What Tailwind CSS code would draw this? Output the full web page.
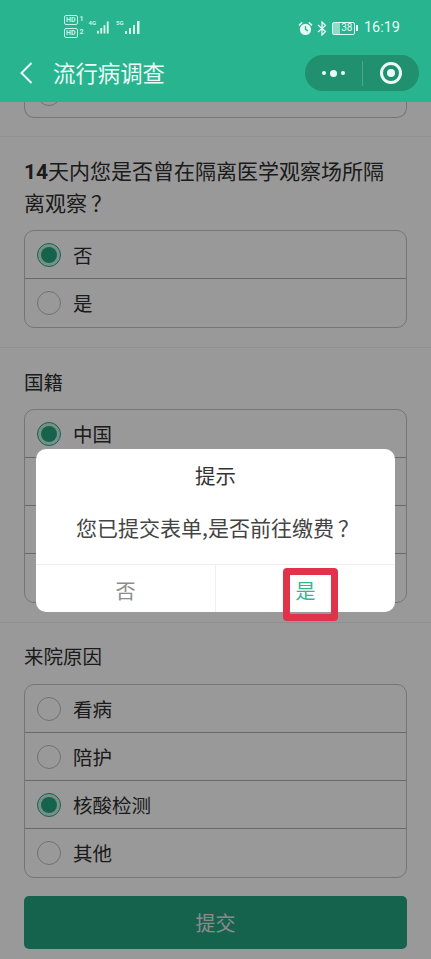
<!DOCTYPE html>
<html lang="zh">
<head>
  <meta charset="UTF-8" />
  <meta name="viewport" content="width=device-width, initial-scale=1.0" />
  <title>流行病调查</title>
  <script src="https://cdn.jsdelivr.net/npm/@tailwindcss/browser@4"></script>
</head>
<body class="bg-white">
  <div class="relative w-[431px] h-[959px] overflow-hidden bg-white text-[#2e2e2e] font-['Noto_Sans_CJK_SC','Noto_Sans',sans-serif]">

    <!-- header -->
    <header class="relative z-20 h-[102px] bg-[#28b48f] text-white">
      <div class="flex h-[55px] items-start justify-between pl-[64px] pr-[31px] pt-[15px]">
        <div class="flex items-start gap-[5px]">
          <div class="flex flex-col gap-[3px] text-[7px] leading-[9px] font-bold font-['Roboto',sans-serif] text-[#c9f3e6]">
            <div class="flex gap-[2px]"><span class="border border-[#c9f3e6] rounded-[2px] px-[1px] h-[10px] leading-[8px]">HD</span><span>1</span></div>
            <div class="flex gap-[2px]"><span class="border border-[#c9f3e6] rounded-[2px] px-[1px] h-[10px] leading-[8px]">HD</span><span>2</span></div>
          </div>
          <div class="flex items-end h-[15px] mt-[5px] text-[6px] leading-[6px] font-bold font-['Roboto',sans-serif] text-[#c9f3e6]">
            <span class="self-start">4G</span>
            <svg class="ml-[1px]" width="14" height="15" viewBox="0 0 15 15" fill="#d7f7ed"><rect x="0" y="11" width="2" height="3"/><rect x="3.5" y="8" width="2" height="6"/><rect x="7" y="5" width="2" height="9"/><rect x="10.5" y="1" width="2" height="13"/></svg>
          </div>
          <div class="flex items-end h-[15px] mt-[5px] text-[6px] leading-[6px] font-bold font-['Roboto',sans-serif] text-[#c9f3e6]">
            <span class="self-start w-[7px]">5G</span>
            <svg class="ml-[2px]" width="17" height="15" viewBox="0 0 17 15" fill="#d7f7ed"><rect x="0" y="11" width="2" height="3"/><rect x="4" y="8" width="2" height="6"/><rect x="8" y="5" width="2" height="9"/><rect x="12" y="1" width="2.5" height="13"/></svg>
          </div>
        </div>
        <div class="flex items-center h-[26px]">
          <svg width="15" height="15" viewBox="0 0 16 16" fill="#e4faf3"><circle cx="8" cy="9" r="6"/><path d="M0.5 4 L4 0.8 L5 2 L1.6 5.2 Z M15.5 4 L12 0.8 L11 2 L14.4 5.2 Z"/><path d="M8 5.5 V9 L10.5 10.5" stroke="#28b48f" stroke-width="1.4" fill="none"/></svg>
          <svg class="ml-[4px]" width="10" height="15" viewBox="0 0 10 15" fill="none" stroke="#e4faf3" stroke-width="1.3"><path d="M1 4 L8.5 10.5 L5 14 V1 L8.5 4.5 L1 11"/></svg>
          <div class="ml-[5px] flex items-center">
            <div class="flex h-[13px] w-[23px] items-center justify-end rounded-[2px] border border-[#e4faf3] bg-[linear-gradient(90deg,#8fdcc6_35%,transparent_35%)] pr-[2px] text-[10px] leading-none font-['Roboto',sans-serif] text-[#e4faf3]">38</div>
            <div class="ml-[1px] h-[6px] w-[1.5px] bg-[#e4faf3]"></div>
          </div>
          <span class="ml-[6px] text-[14.5px] leading-none font-['Roboto',sans-serif] text-[#e4faf3]">16:19</span>
        </div>
      </div>
      <div class="flex h-[36px] items-center justify-between pl-[20px] pr-[12px]">
        <div class="flex items-center">
          <svg width="13" height="22" viewBox="0 0 13 22" fill="none" stroke="#eafbf6" stroke-width="2"><path d="M11.5 1 L1.5 11 L11.5 21"/></svg>
          <span class="ml-[20px] -mt-[2px] text-[22.4px] leading-[36px] text-[#eafbf6]">流行病调查</span>
        </div>
        <div class="flex h-[36px] w-[114px] items-center rounded-full bg-[#21906f]">
          <div class="flex w-[57px] items-center justify-center gap-[4px]">
            <span class="size-[4px] rounded-full bg-[#eafbf6]"></span>
            <span class="size-[7px] rounded-full bg-[#eafbf6]"></span>
            <span class="size-[4px] rounded-full bg-[#eafbf6]"></span>
          </div>
          <div class="h-[25px] w-px bg-white/20"></div>
          <div class="flex flex-1 items-center justify-center">
            <span class="flex size-[22px] items-center justify-center rounded-full border-[3px] border-[#eafbf6]"><span class="size-[8px] rounded-full bg-[#eafbf6]"></span></span>
          </div>
        </div>
      </div>
    </header>

    <!-- form under the mask -->
    <main>
      <section class="h-[35px] px-[24px] border-b border-[#eeeeee]">
        <div class="relative h-[16px] overflow-hidden rounded-b-[10px] border border-t-0 border-[#c4c4c4]">
          <span class="absolute left-[12px] top-[-20px] size-[24px] rounded-full border border-[#bdbdbd]"></span>
        </div>
      </section>

      <section class="h-[211px] px-[24px] pt-[18px] border-b border-[#eeeeee]">
        <h2 class="h-[75px] pr-[12px] text-[21px] leading-[30px]"><b class="font-['Roboto',sans-serif] font-bold">14</b>天内您是否曾在隔离医学观察场所隔离观察<span class="ml-[4px] font-['Noto_Sans_CJK_TC',sans-serif]">？</span></h2>
        <div class="divide-y divide-[#b0b0b0] rounded-[10px] border border-[#c4c4c4]">
          <label class="flex h-[48px] items-center gap-[12px] pl-[12px] text-[19.5px]"><span class="flex size-[24px] items-center justify-center rounded-full border border-[#26a581] bg-[#c8f0e3]"><span class="size-[16px] rounded-full bg-[#26a581]"></span></span>否</label>
          <label class="flex h-[48px] items-center gap-[12px] pl-[12px] text-[19.5px]"><span class="size-[24px] rounded-full border border-[#bdbdbd]"></span>是</label>
        </div>
      </section>

      <section class="h-[275px] px-[24px] pt-[19px] border-b border-[#eeeeee]">
        <h2 class="h-[42px] text-[19.5px] leading-[30px]">国籍</h2>
        <div class="divide-y divide-[#b0b0b0] rounded-[10px] border border-[#c4c4c4]">
          <label class="flex h-[48px] items-center gap-[12px] pl-[12px] text-[19.5px]"><span class="flex size-[24px] items-center justify-center rounded-full border border-[#26a581] bg-[#c8f0e3]"><span class="size-[16px] rounded-full bg-[#26a581]"></span></span>中国</label>
          <div class="h-[48px]"></div>
          <div class="h-[48px]"></div>
          <div class="h-[48px]"></div>
        </div>
      </section>

      <section class="px-[24px] pt-[18px]">
        <h2 class="h-[43px] text-[19.5px] leading-[30px]">来院原因</h2>
        <div class="divide-y divide-[#b0b0b0] rounded-[10px] border border-[#c4c4c4]">
          <label class="flex h-[48px] items-center gap-[12px] pl-[12px] text-[19.5px]"><span class="size-[24px] rounded-full border border-[#bdbdbd]"></span>看病</label>
          <label class="flex h-[48px] items-center gap-[12px] pl-[12px] text-[19.5px]"><span class="size-[24px] rounded-full border border-[#bdbdbd]"></span>陪护</label>
          <label class="flex h-[48px] items-center gap-[12px] pl-[12px] text-[19.5px]"><span class="flex size-[24px] items-center justify-center rounded-full border border-[#26a581] bg-[#c8f0e3]"><span class="size-[16px] rounded-full bg-[#26a581]"></span></span>核酸检测</label>
          <label class="flex h-[48px] items-center gap-[12px] pl-[12px] text-[19.5px]"><span class="size-[24px] rounded-full border border-[#bdbdbd]"></span>其他</label>
        </div>
        <button class="mt-[18px] h-[53px] w-full rounded-[5px] bg-[#26a581] text-[20px] text-[#e6e6e6]">提交</button>
      </section>
    </main>

    <!-- mask -->
    <div class="absolute inset-0 z-10 bg-black/40"></div>

    <!-- dialog -->
    <div class="absolute left-[36px] top-[449px] z-30 w-[359px] rounded-[10px] bg-white text-[#333333]">
      <div class="pt-[11px] text-center text-[20.5px] leading-[30px]">提示</div>
      <div class="pl-[4px] pt-[22px] text-center text-[21px] leading-[30px] text-[#444444]">您已提交表单,是否前往缴费<span class="ml-[4px] font-['Noto_Sans_CJK_TC',sans-serif]">？</span></div>
      <div class="mt-[22px] flex h-[48px] border-t border-[#eeeeee]">
        <div class="flex w-[180px] items-center justify-center border-r border-[#eeeeee] pt-[5px] text-[20px] text-[#8c8c8c]">否</div>
        <div class="flex flex-1 items-center justify-center pt-[5px] text-[20px] text-[#35b394]">是</div>
      </div>
    </div>

    <!-- red annotation box -->
    <div class="absolute left-[283px] top-[568px] z-40 h-[53px] w-[55px] rounded-[4px] border-[7px] border-[#e0334a]"></div>
  </div>
</body>
</html>
